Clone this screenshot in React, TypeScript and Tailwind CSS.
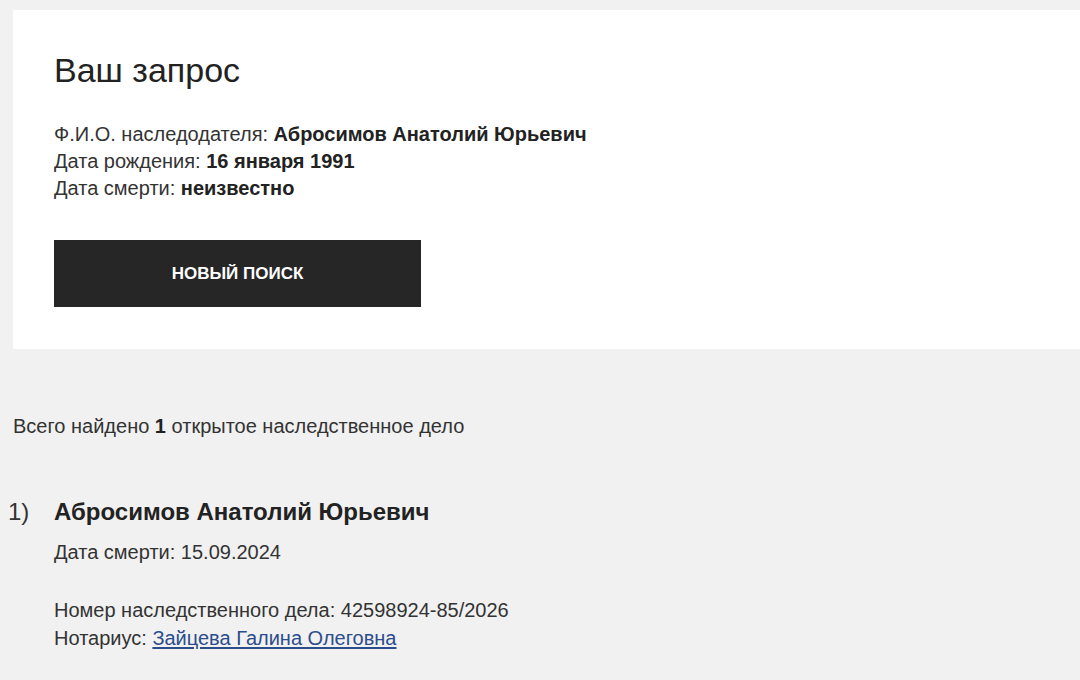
const font = { fontFamily: '"Liberation Sans", Arial, sans-serif' };

export default function App() {
  return (
    <div className="min-h-[680px] bg-[#f1f1f1] text-[#222] pt-[10px] pl-[13px]" style={font}>
      {/* Request summary card */}
      <section className="bg-white pl-[41px] pt-[40px] pb-[42px]">
        <h1 className="text-[34px] leading-[40px] font-normal text-[#222]">Ваш запрос</h1>
        <div className="mt-[31px] text-[20px] leading-[27px] text-[#333]">
          <p>
            Ф.И.О. наследодателя: <b className="text-[#222]">Абросимов Анатолий Юрьевич</b>
          </p>
          <p>
            Дата рождения: <b className="text-[#222]">16 января 1991</b>
          </p>
          <p>
            Дата смерти: <b className="text-[#222]">неизвестно</b>
          </p>
        </div>
        <button className="mt-[38px] w-[367px] h-[67px] bg-[#262626] text-white text-[17px] font-bold uppercase">
          Новый поиск
        </button>
      </section>

      {/* Results */}
      <p className="mt-[64px] text-[20px] leading-[27px] text-[#333]">
        Всего найдено <b className="text-[#222]">1</b> открытое наследственное дело
      </p>

      <ol className="mt-[56px]">
        <li className="flex -ml-[5px]">
          <span className="w-[46px] text-[24px] leading-[32px] text-[#333]">1)</span>
          <div>
            <h2 className="text-[24px] leading-[32px] font-bold">Абросимов Анатолий Юрьевич</h2>
            <p className="mt-[11px] text-[20px] leading-[27px] text-[#333]">Дата смерти: 15.09.2024</p>
            <div className="mt-[30px] text-[20px] leading-[28px] text-[#333]">
              <p>Номер наследственного дела: 42598924-85/2026</p>
              <p>
                Нотариус:{' '}
                <a href="#" className="text-[#2c4d8c] underline underline-offset-2">
                  Зайцева Галина Олеговна
                </a>
              </p>
            </div>
          </div>
        </li>
      </ol>
    </div>
  );
}
